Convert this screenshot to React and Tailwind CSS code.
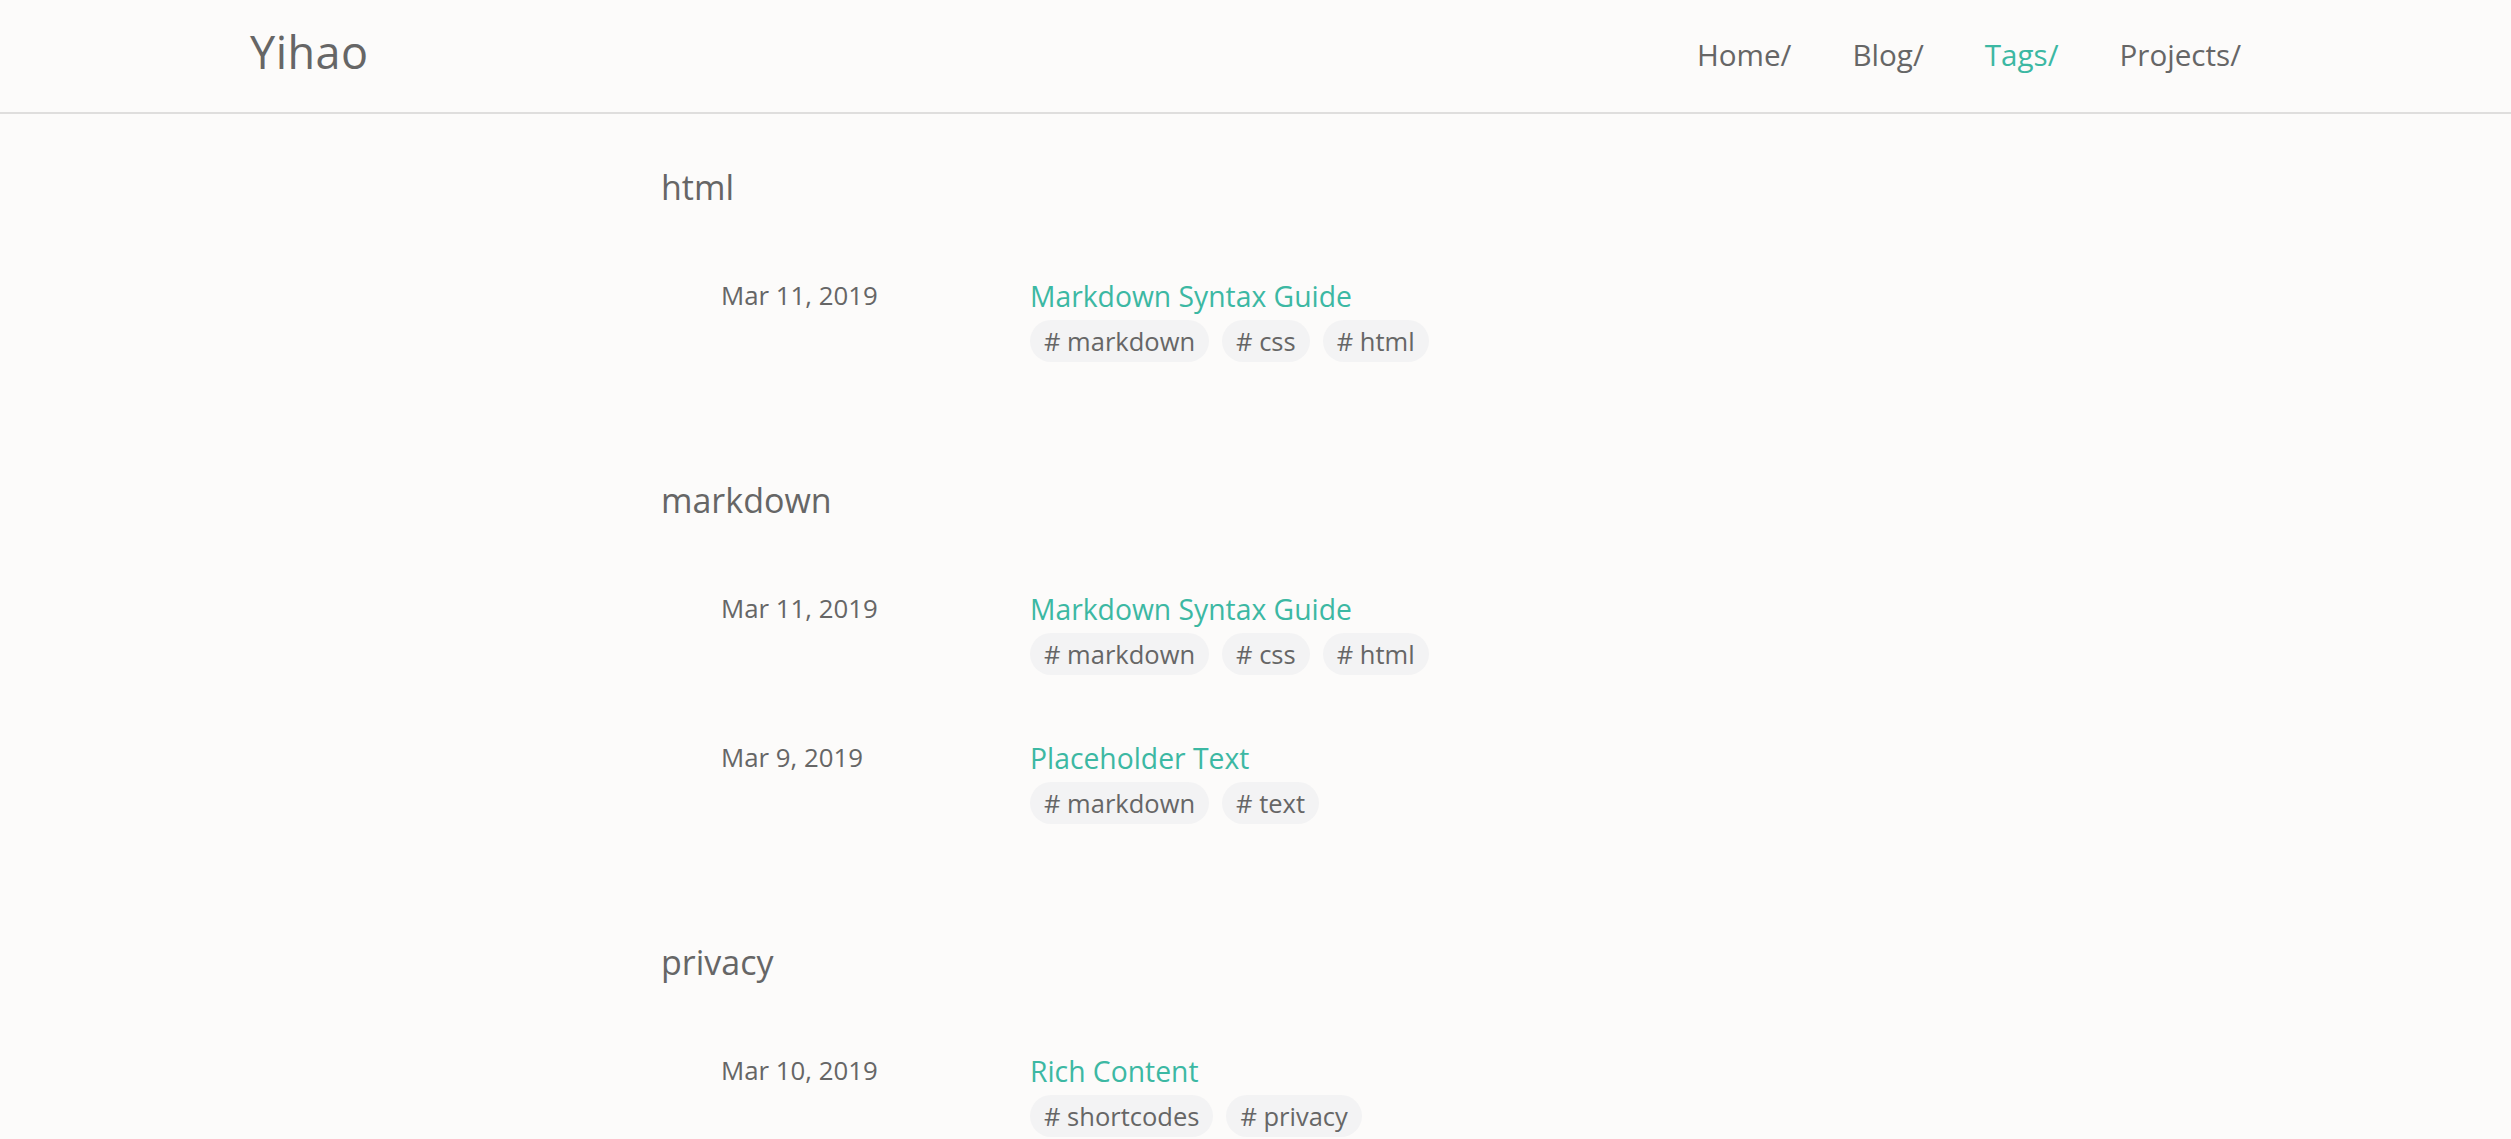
const sections = [
  {
    name: "html",
    posts: [
      { date: "Mar 11, 2019", title: "Markdown Syntax Guide", tags: ["markdown", "css", "html"] },
    ],
  },
  {
    name: "markdown",
    posts: [
      { date: "Mar 11, 2019", title: "Markdown Syntax Guide", tags: ["markdown", "css", "html"] },
      { date: "Mar 9, 2019", title: "Placeholder Text", tags: ["markdown", "text"] },
    ],
  },
  {
    name: "privacy",
    posts: [
      { date: "Mar 10, 2019", title: "Rich Content", tags: ["shortcodes", "privacy"] },
    ],
  },
];

const nav = ["Home/", "Blog/", "Tags/", "Projects/"];

export default function App() {
  return (
    <div className="min-h-screen bg-[#fcfbfa] font-['Open_Sans','Noto_Sans',sans-serif] text-[#666666]">
      {/* Top bar */}
      <header className="h-[114px] border-b-2 border-[#dfdedd]">
        <div className="mx-auto flex h-full max-w-[2011px] items-center justify-between pr-[20px]">
          <a className="pb-[8px] text-[45px] font-medium tracking-[0.5px] text-[#666666]">Yihao</a>
          <nav className="flex items-center gap-[61px] pb-[2px] text-[29.6px]">
            {nav.map((n) => (
              <a key={n} className={n === "Tags/" ? "text-[#3cb8a3]" : "text-[#666666]"}>
                {n}
              </a>
            ))}
          </nav>
        </div>
      </header>

      <main className="mx-auto flex w-[1189px] flex-col gap-[114px] pt-[49px] pb-[60px]">
        {sections.map((s) => (
          <section key={s.name} className="flex flex-col">
            <h2 className="h-[48px] text-[34px] leading-[48px]">{s.name}</h2>
            <div className="mt-[63px] flex flex-col gap-[61px]">
              {s.posts.map((p) => (
                <div key={p.title} className="flex pl-[60px]">
                  <div className="w-[309px] text-[25.8px] leading-[42px]">{p.date}</div>
                  <div>
                    <a className="block text-[28.3px] leading-[44px] text-[#3cb8a3]">{p.title}</a>
                    <div className="mt-[2px] flex gap-[13px]">
                      {p.tags.map((t) => (
                        <span
                          key={t}
                          className="h-[42px] rounded-full bg-[#f3f3f4] px-[14px] text-[25.5px] leading-[42px]"
                        >
                          # {t}
                        </span>
                      ))}
                    </div>
                  </div>
                </div>
              ))}
            </div>
          </section>
        ))}
      </main>
    </div>
  );
}
